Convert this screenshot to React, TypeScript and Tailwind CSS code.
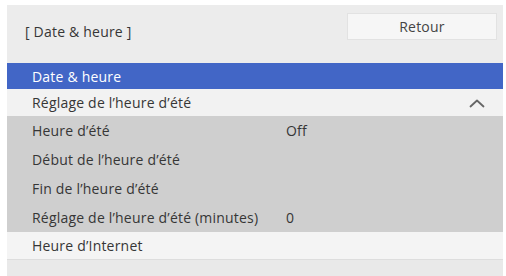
const subRows = [
  { label: 'Heure d’été', value: 'Off' },
  { label: 'Début de l’heure d’été', value: '' },
  { label: 'Fin de l’heure d’été', value: '' },
  { label: 'Réglage de l’heure d’été (minutes)', value: '0' },
]

export default function App() {
  return (
    <div
      className="w-[506px] h-[276px] bg-white pl-[7px] pr-[3px] pt-[5px] text-[14px] tracking-[0.2px] text-[#363636] overflow-hidden"
      style={{ fontFamily: '"Open Sans", "Noto Sans", sans-serif' }}
    >
      <div className="h-full bg-[#ececec] flex flex-col">
        {/* Header */}
        <div className="h-[58px] shrink-0 flex items-start justify-between pl-[18px] pr-[6px]">
          <span className="mt-[16px]">[ Date &amp; heure ]</span>
          <button className="mt-[8px] w-[150px] h-[27px] bg-[#f6f6f6] border border-[#e2e2e2] text-[#444]">
            Retour
          </button>
        </div>

        {/* Menu */}
        <div className="h-[26px] shrink-0 flex items-center pl-[25px] bg-[#4266c6] text-white">
          Date &amp; heure
        </div>
        <div className="h-[27px] shrink-0 flex items-center justify-between pl-[25px] pr-[18px] bg-[#f2f2f2]">
          <span>Réglage de l’heure d’été</span>
          <svg width="16" height="10" viewBox="0 0 16 10" fill="none" className="text-[#666]">
            <polyline points="1.5,8.5 8,2.5 14.5,8.5" stroke="currentColor" strokeWidth="1.8" strokeLinecap="round" strokeLinejoin="round" />
          </svg>
        </div>
        <div className="bg-[#cfcfcf] shrink-0">
          {subRows.map((r) => (
            <div key={r.label} className="h-[29px] flex items-center pl-[25px]">
              <span className="w-[254px] shrink-0">{r.label}</span>
              <span>{r.value}</span>
            </div>
          ))}
        </div>
        <div className="h-[28px] shrink-0 flex items-center pl-[25px] bg-[#f4f4f4] border-b border-[#dddddd]">
          Heure d’Internet
        </div>
        <div className="flex-1 bg-[#e9e9e9]" />
      </div>
    </div>
  )
}
